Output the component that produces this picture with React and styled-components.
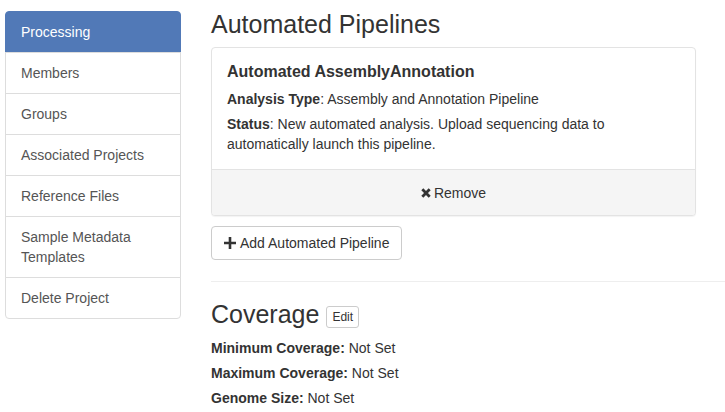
import React from "react";
import styled, { createGlobalStyle } from "styled-components";

const Global = createGlobalStyle`
  html, body { margin: 0; padding: 0; background: #fff; }
  body { font-family: "Liberation Sans", Arial, sans-serif; font-size: 14px; line-height: 20px; color: #333; }
  * { box-sizing: border-box; }
`;

const Page = styled.div`
  display: flex;
  align-items: flex-start;
  gap: 30px;
  padding: 11px 0 0 5px;
  width: 725px;
  overflow: hidden;
`;

const Nav = styled.div`
  width: 176px;
  flex: none;
  display: flex;
  flex-direction: column;
`;

const NavItem = styled.div`
  padding: 10px 15px;
  border: 1px solid #ddd;
  margin-bottom: -1px;
  color: ${(p) => (p.$active ? "#fff" : "#555")};
  background: ${(p) => (p.$active ? "#5179b7" : "#fff")};
  border-color: ${(p) => (p.$active ? "#5179b7" : "#ddd")};
  &:first-child { border-radius: 4px 4px 0 0; }
  &:last-child { border-radius: 0 0 4px 4px; margin-bottom: 0; }
`;

const Main = styled.div`
  flex: 1;
  min-width: 0;
`;

const Heading = styled.h3`
  margin: 0 0 9px;
  font-size: 25px;
  font-weight: 500;
  line-height: 27px;
  color: #333;
  display: flex;
  align-items: center;
  gap: 7px;
`;

const Card = styled.div`
  width: 485px;
  border: 1px solid #e3e3e3;
  border-radius: 4px;
  box-shadow: 0 1px 1px rgba(0,0,0,0.05);
  background: #fff;
`;

const CardBody = styled.div`
  padding: 15px;
`;

const CardTitle = styled.h4`
  margin: 0 0 8px;
  font-size: 16px;
  font-weight: 700;
  line-height: 18px;
`;

const Para = styled.p`
  margin: 0 0 5px;
  &:last-child { margin-bottom: 0; }
`;

const CardFooter = styled.div`
  background: #f5f5f5;
  border-top: 1px solid #e3e3e3;
  border-radius: 0 0 3px 3px;
  padding: 7px 12px 6px;
  display: flex;
  justify-content: center;
`;

const LinkBtn = styled.span`
  display: inline-flex;
  align-items: center;
  gap: 3px;
  padding: 6px 12px;
  color: #333;
`;

const Button = styled.div`
  display: flex;
  width: max-content;
  align-items: center;
  gap: 4px;
  margin-top: 10px;
  padding: 6px 12px;
  border: 1px solid #ccc;
  border-radius: 4px;
  background: #fff;
  color: #333;
`;

const Rule = styled.hr`
  border: 0;
  border-top: 1px solid #eee;
  margin: 21px 0 19px;
`;

const SmallBtn = styled.span`
  display: inline-block;
  font-size: 12px;
  line-height: 1.5;
  padding: 1px 5px;
  border: 1px solid #ccc;
  border-radius: 3px;
  color: #333;
  background: #fff;
  margin-top: 5px;
`;

const Fields = styled.div`
  padding-top: 1px;
`;

const Field = styled.p`
  margin: 0 0 5px;
`;

const XIcon = () => (
  <svg width="10" height="10" viewBox="0 0 10 10">
    <path d="M1.3 1.3 L8.7 8.7 M8.7 1.3 L1.3 8.7" stroke="#333" strokeWidth="2.8" strokeLinecap="butt" />
  </svg>
);

const PlusIcon = () => (
  <svg width="12" height="12" viewBox="0 0 12 12">
    <path d="M6 0 V12 M0 6 H12" stroke="#333" strokeWidth="2.6" />
  </svg>
);

const items = [
  "Processing",
  "Members",
  "Groups",
  "Associated Projects",
  "Reference Files",
  "Sample Metadata Templates",
  "Delete Project",
];

export default function App() {
  return (
    <>
      <Global />
      <Page>
        <Nav>
          {items.map((t, i) => (
            <NavItem key={t} $active={i === 0}>{t}</NavItem>
          ))}
        </Nav>
        <Main>
          <Heading>Automated Pipelines</Heading>
          <Card>
            <CardBody>
              <CardTitle>Automated AssemblyAnnotation</CardTitle>
              <Para><strong>Analysis Type</strong>: Assembly and Annotation Pipeline</Para>
              <Para><strong>Status</strong>: New automated analysis. Upload sequencing data to automatically launch this pipeline.</Para>
            </CardBody>
            <CardFooter>
              <LinkBtn><XIcon />Remove</LinkBtn>
            </CardFooter>
          </Card>
          <Button><PlusIcon />Add Automated Pipeline</Button>
          <Rule />
          <Heading>Coverage <SmallBtn>Edit</SmallBtn></Heading>
          <Fields>
            <Field><strong>Minimum Coverage:</strong> Not Set</Field>
            <Field><strong>Maximum Coverage:</strong> Not Set</Field>
            <Field><strong>Genome Size:</strong> Not Set</Field>
          </Fields>
        </Main>
      </Page>
    </>
  );
}
